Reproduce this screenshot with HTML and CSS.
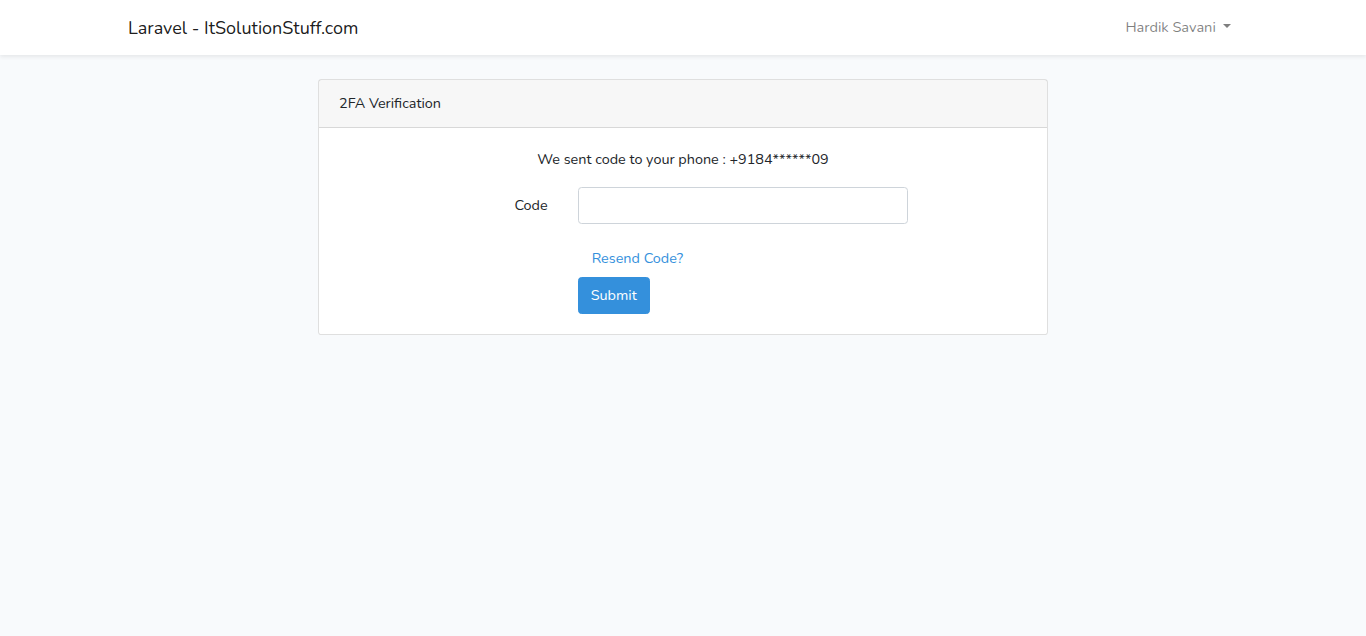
FILE: index.html
```html
<!DOCTYPE html>
<html lang="en">
<head>
<meta charset="utf-8">
<title>Laravel - ItSolutionStuff.com</title>
<link rel="stylesheet" href="styles.css">
</head>
<body>
<nav class="navbar">
  <div class="container nav-inner">
    <a class="brand" href="#">Laravel - ItSolutionStuff.com</a>
    <a class="nav-link dropdown-toggle" href="#">Hardik Savani</a>
  </div>
</nav>
<main class="main">
  <div class="container">
    <div class="card">
      <div class="card-header">2FA Verification</div>
      <div class="card-body">
        <p class="sent">We sent code to your phone : +9184******09</p>
        <form class="form">
          <div class="form-row">
            <label class="col-label" for="code">Code</label>
            <div class="col-field">
              <input id="code" class="form-control" type="text">
            </div>
          </div>
          <div class="form-row resend-row">
            <div class="col-label"></div>
            <div class="col-field">
              <a class="btn btn-link" href="#">Resend Code?</a>
            </div>
          </div>
          <div class="form-row submit-row">
            <div class="col-label"></div>
            <div class="col-field">
              <button type="button" class="btn btn-primary">Submit</button>
            </div>
          </div>
        </form>
      </div>
    </div>
  </div>
</main>
</body>
</html>
```

FILE: styles.css
```css
* { box-sizing: border-box; }
html, body { margin: 0; padding: 0; }
body {
  background: #f8fafc;
  font-family: "Nunito", "Noto Sans", sans-serif;
  font-size: 14.4px;
  line-height: 1.6;
  color: #212529;
  min-height: 636px;
}
a { text-decoration: none; }
.container {
  width: 1140px;
  margin: 0 auto;
  padding: 0 15px;
}
.navbar {
  background: #fff;
  box-shadow: 0 2px 4px rgba(0,0,0,.075);
  padding: 7.2px 0;
}
.nav-inner {
  display: flex;
  align-items: center;
  justify-content: space-between;
  height: 40.6px;
}
.brand {
  font-size: 18px;
  color: rgba(0,0,0,.9);
  line-height: 1.6;
  margin-top: 2px;
}
.nav-link {
  color: rgba(0,0,0,.5);
  padding: 8px 7.2px;
  font-size: 14.6px;
}
.dropdown-toggle::after {
  content: "";
  display: inline-block;
  margin-left: 7px;
  vertical-align: .255em;
  border-top: .3em solid;
  border-right: .3em solid transparent;
  border-left: .3em solid transparent;
}
.main { padding: 24px 0; }
.card {
  width: 730px;
  margin: 0 auto;
  background: #fff;
  border: 1px solid rgba(0,0,0,.125);
  border-radius: 3.6px;
}
.card-header {
  background: rgba(0,0,0,.03);
  border-bottom: 1px solid rgba(0,0,0,.125);
  padding: 12px 20px;
}
.card-body { padding: 20px 18px 20px; }
.sent {
  margin: 0 0 16px;
  text-align: center;
}
.form-row {
  display: flex;
  margin: 0 -15px;
  align-items: center;
}
.col-label {
  width: 240.67px;
  padding: 0 15px;
  text-align: right;
}
.col-field {
  width: 360px;
  padding: 0 15px;
}
.form-control {
  display: block;
  width: 100%;
  height: 37px;
  padding: 5.4px 10.8px;
  font: inherit;
  color: #495057;
  background: #fff;
  border: 1px solid #ced4da;
  border-radius: 3.6px;
}
.resend-row { margin-top: 17px; }
.btn {
  display: inline-block;
  font: inherit;
  line-height: 1.6;
  padding: 5.4px 13.5px;
  border: 1px solid transparent;
  border-radius: 3.6px;
}
.btn-link { color: #3490dc; padding-left: 13px; }
.submit-row { margin-top: 0; }
.btn-primary {
  background: #3490dc;
  border-color: #3490dc;
  color: #fff;
  height: 37px;
  padding: 5.4px 12px;
}
```
